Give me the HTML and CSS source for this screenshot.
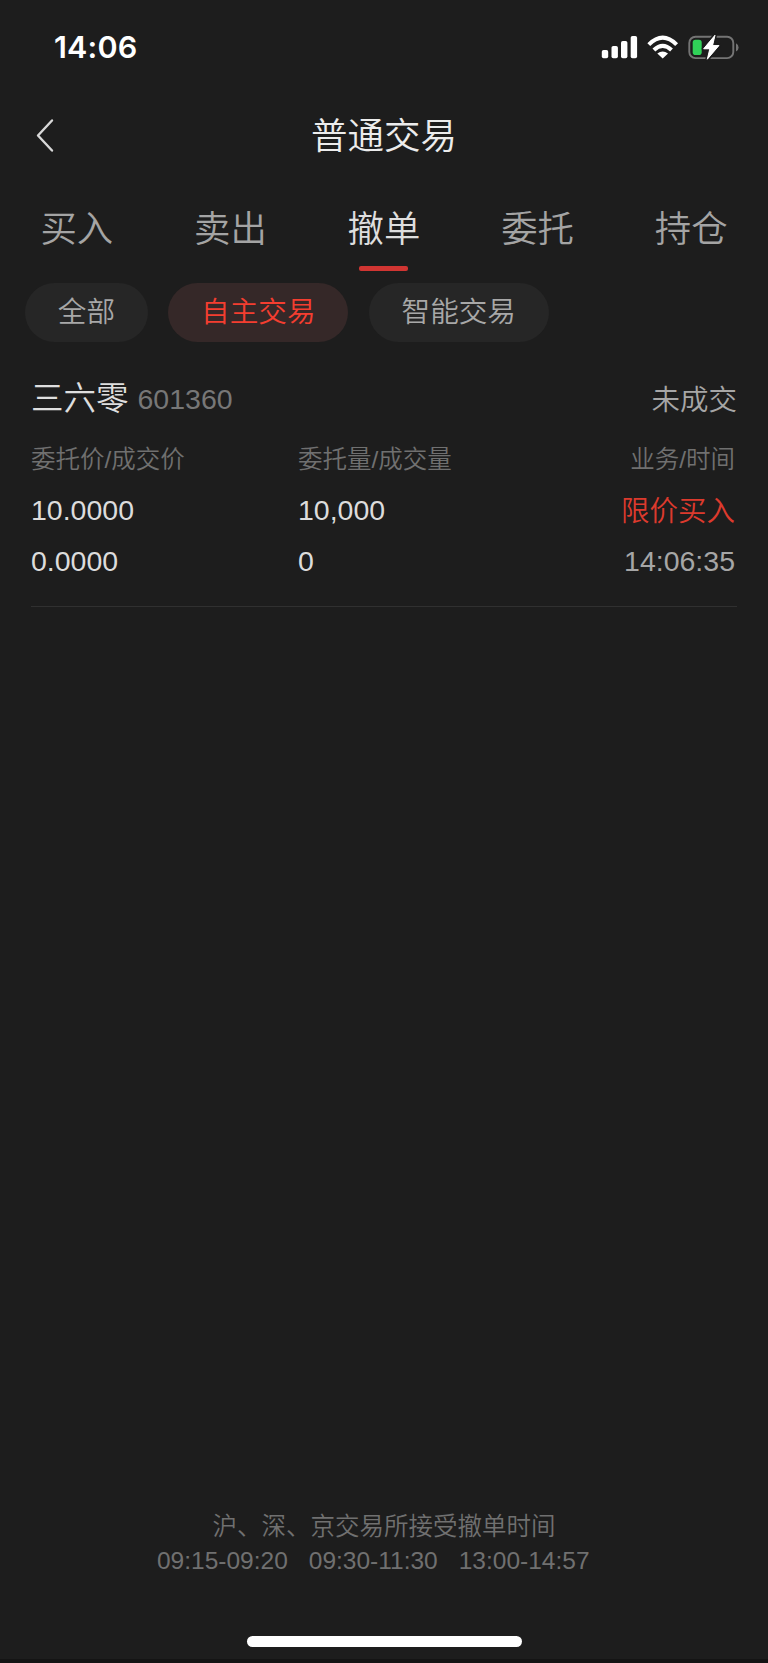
FILE: index.html
```html
<!DOCTYPE html>
<html lang="zh-CN">
<head>
<meta charset="utf-8">
<title>普通交易</title>
<link rel="stylesheet" href="styles.css">
</head>
<body>
<div class="screen">
  <header class="status">
    <span class="clock">14:06</span>
    <svg class="indicators" width="140" height="30" viewBox="600 32 140 30">
      <g fill="#fff">
        <rect x="601.8" y="50" width="6.4" height="8.2" rx="1.8"/>
        <rect x="611.5" y="46" width="6.4" height="12.2" rx="1.8"/>
        <rect x="621" y="41" width="6.4" height="17.2" rx="1.8"/>
        <rect x="630.7" y="36" width="6.4" height="22.2" rx="1.8"/>
        <path d="M657.3 53.6Q662.7 49.5 668 53.6L662.7 58.6Z"/>
      </g>
      <g fill="none" stroke="#fff" stroke-width="4.1">
        <path d="M648.8 44.6Q662.7 30.8 676.6 44.6"/>
        <path d="M653.9 50Q662.7 41.8 671.5 50"/>
      </g>
      <rect x="689.3" y="36.7" width="44" height="21.4" rx="6.2" fill="none" stroke="#747474" stroke-width="1.9"/>
      <path d="M736 43.2q2.6 1.2 2.6 4.2t-2.6 4.2z" fill="#747474"/>
      <rect x="692.7" y="39.8" width="9" height="15.2" rx="2.8" fill="#30d158"/>
      <path d="M715 35.2L703.6 48.8H709.8L707.3 59.2L719 45.5H712.6Z" fill="#fff" stroke="#1d1d1d" stroke-width="4" stroke-linejoin="round" paint-order="stroke"/>
      <path d="M715 35.2L703.6 48.8H709.8L707.3 59.2L719 45.5H712.6Z" fill="#fff" stroke="#fff" stroke-width="0.9" stroke-linejoin="round"/>
    </svg>
  </header>
  <div class="titlebar">
    <svg class="back" width="20" height="36" viewBox="0 0 20 36"><path d="M17 2.5L3 17.5L17 32.5" fill="none" stroke="#d8d8d8" stroke-width="2.4" stroke-linecap="round" stroke-linejoin="round"/></svg>
    <h1 class="title">普通交易</h1>
  </div>
  <nav class="tabs">
    <span class="tab">买入</span>
    <span class="tab">卖出</span>
    <span class="tab tab-active">撤单</span>
    <span class="tab">委托</span>
    <span class="tab">持仓</span>
  </nav>
  <div class="chips">
    <span class="chip">全部</span>
    <span class="chip chip-active">自主交易</span>
    <span class="chip">智能交易</span>
  </div>
  <section class="order">
    <div class="order-head">
      <span class="name">三六零</span>
      <span class="code">601360</span>
      <span class="state">未成交</span>
    </div>
    <div class="row labels"><span>委托价/成交价</span><span>委托量/成交量</span><span class="end">业务/时间</span></div>
    <div class="row values"><span>10.0000</span><span>10,000</span><span class="end buy">限价买入</span></div>
    <div class="row values"><span>0.0000</span><span>0</span><span class="end time">14:06:35</span></div>
  </section>
  <footer class="hours">
    <p class="note">沪、深、京交易所接受撤单时间</p>
    <p class="times"><span>09:15-09:20</span><span>09:30-11:30</span><span>13:00-14:57</span></p>
  </footer>
  <div class="home"></div>
</div>
</body>
</html>
```
FILE: styles.css
```css
* { box-sizing: border-box; }
body { margin: 0; background: #1d1d1d; }
h1, p { margin: 0; font-weight: inherit; }
.screen {
  height: 1663px;
  display: flex;
  flex-direction: column;
  font-family: "Liberation Sans", "Noto Sans CJK SC", sans-serif;
  font-weight: 350;
  color: #dcdcdc;
  border-bottom: 4px solid #141414;
  white-space: nowrap;
}
.status {
  height: 94px;
  padding: 0 28px 0 54px;
  display: flex;
  align-items: center;
  justify-content: space-between;
}
.clock {
  font: 600 30.5px/36px Inter, sans-serif;
  letter-spacing: 0.2px;
  color: #fff;
}
.titlebar {
  height: 84px;
  padding: 0 35px;
  display: grid;
  grid-template-columns: 20px 1fr 20px;
  align-items: center;
}
.title {
  padding-top: 2px;
  text-align: center;
  font-size: 36.5px;
  line-height: 50px;
  color: #ececec;
}
.tabs {
  height: 105px;
  display: flex;
}
.tab {
  flex: 1;
  display: flex;
  flex-direction: column;
  align-items: center;
  padding-top: 27px;
  font-size: 36.4px;
  line-height: 50px;
  color: #a4a4a4;
}
.tab-active { color: #dedede; }
.tab-active::after {
  content: "";
  width: 49px;
  height: 5px;
  margin-top: 11px;
  border-radius: 2px;
  background: #d03532;
}
.chips {
  display: flex;
  gap: 20.5px;
  padding-left: 25px;
}
.chip {
  height: 59px;
  padding: 0 32.8px;
  border-radius: 30px;
  background: #262626;
  font-size: 28.6px;
  line-height: 59px;
  color: #a8a8a8;
}
.chip-active { background: #352828; color: #f43e30; }
.order {
  height: 265px;
  margin: 0 31px;
  padding-top: 32px;
  border-bottom: 1px solid #303030;
}
.order-head {
  display: flex;
  align-items: center;
  height: 51px;
  line-height: 51px;
}
.name { font-size: 32.5px; margin-right: 9px; color: #dedede; }
.code { font-size: 28.5px; line-height: 53px; color: #777; }
.state { font-size: 28.5px; padding-top: 2px; margin-left: auto; color: #a6a6a6; }
.row {
  display: grid;
  grid-template-columns: 267px 267px 1fr;
  padding-right: 2px;
  line-height: 51px;
}
.labels { height: 60px; line-height: 69px; font-size: 24.5px; color: #707070; }
.values { height: 51px; font-size: 28.5px; }
.end { text-align: right; }
.buy { line-height: 53px; color: #dc3a2d; }
.time { color: #a6a6a6; }
.hours {
  margin-top: auto;
  text-align: center;
  font-size: 24.5px;
  line-height: 35px;
  color: #707070;
}
.note { line-height: 37px; }
.times {
  display: flex;
  justify-content: center;
  gap: 21px;
  padding-right: 21.5px;
  line-height: 31px;
}
.home {
  width: 275px;
  height: 11px;
  margin: 60px auto 12px;
  border-radius: 6px;
  background: #fff;
}
```
